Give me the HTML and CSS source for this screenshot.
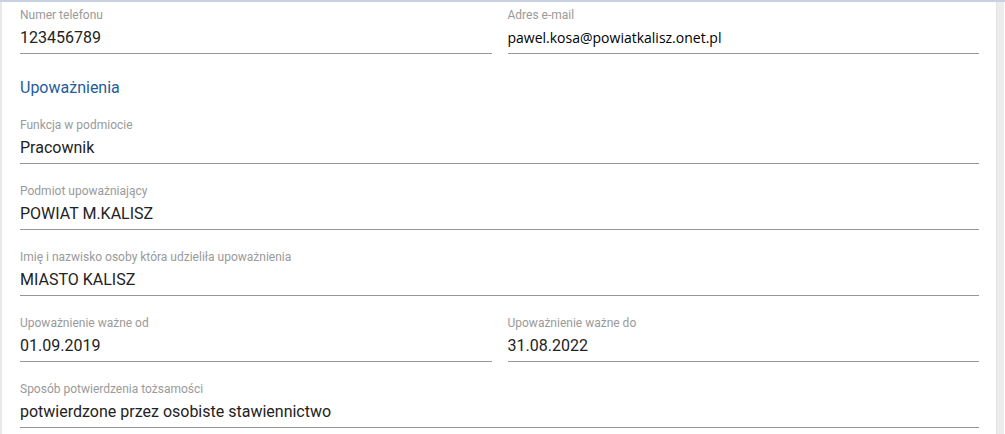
FILE: index.html
```html
<!DOCTYPE html>
<html>
<head>
    <meta charset="UTF-8">
    <meta name="viewport" content="width=device-width, initial-scale=1.0">
    <title>Dane użytkownika</title>
    <link rel="stylesheet" href="styles.css">
</head>
<body>
    <div class="top-bar"></div>
    <div class="page">
        <div class="side-strip"></div>
        <div class="form-panel">
            <div class="form-row two-cols">
                <div class="field">
                    <label class="field-label">Numer telefonu</label>
                    <div class="field-value">123456789</div>
                </div>
                <div class="field">
                    <label class="field-label">Adres e-mail</label>
                    <div class="field-value email">pawel.kosa@powiatkalisz.onet.pl</div>
                </div>
            </div>

            <h3 class="section-title">Upoważnienia</h3>

            <div class="field">
                <label class="field-label">Funkcja w podmiocie</label>
                <div class="field-value">Pracownik</div>
            </div>
            <div class="field">
                <label class="field-label">Podmiot upoważniający</label>
                <div class="field-value">POWIAT M.KALISZ</div>
            </div>
            <div class="field">
                <label class="field-label">Imię i nazwisko osoby która udzieliła upoważnienia</label>
                <div class="field-value">MIASTO KALISZ</div>
            </div>
            <div class="form-row two-cols">
                <div class="field">
                    <label class="field-label">Upoważnienie ważne od</label>
                    <div class="field-value">01.09.2019</div>
                </div>
                <div class="field">
                    <label class="field-label">Upoważnienie ważne do</label>
                    <div class="field-value">31.08.2022</div>
                </div>
            </div>
            <div class="field">
                <label class="field-label">Sposób potwierdzenia tożsamości</label>
                <div class="field-value">potwierdzone przez osobiste stawiennictwo</div>
            </div>
        </div>
        <div class="scroll-strip"></div>
    </div>
</body>
</html>
```

FILE: styles.css
```css
html, body {
    margin: 0;
    padding: 0;
    height: 100%;
    overflow: hidden;
}
body {
    background: white;
    font-family: Roboto, "Liberation Sans", sans-serif;
    color: #222;
}
.top-bar {
    height: 2px;
    background: #c8d1e2;
}
.page {
    display: flex;
    height: calc(100% - 2px);
}
.side-strip {
    width: 2px;
    background: #e8e8e8;
}
.form-panel {
    flex: 1;
    display: flex;
    flex-direction: column;
    gap: 20px;
    padding: 6px 17px 0 18px;
}
.scroll-strip {
    width: 7px;
    margin-right: 1px;
    background: #ececec;
    border-left: 1px solid #e2e2e2;
}
.form-row.two-cols {
    display: grid;
    grid-template-columns: 1fr 1fr;
    column-gap: 16px;
}
.field {
    border-bottom: 1px solid #969696;
    padding-bottom: 5px;
}
.field-label {
    display: block;
    font-size: 12px;
    line-height: 14px;
    color: #9a9a9a;
}
.field-value {
    margin-top: 6px;
    font-size: 16px;
    line-height: 20px;
    color: #222;
}
.field-value.email {
    font-family: "Open Sans", "Noto Sans", sans-serif;
    font-size: 14px;
    font-weight: 500;
    color: #000;
}
.section-title {
    margin: 4px 0 0;
    font-size: 16px;
    line-height: 20px;
    font-weight: normal;
    color: #1f5c9c;
}
```
